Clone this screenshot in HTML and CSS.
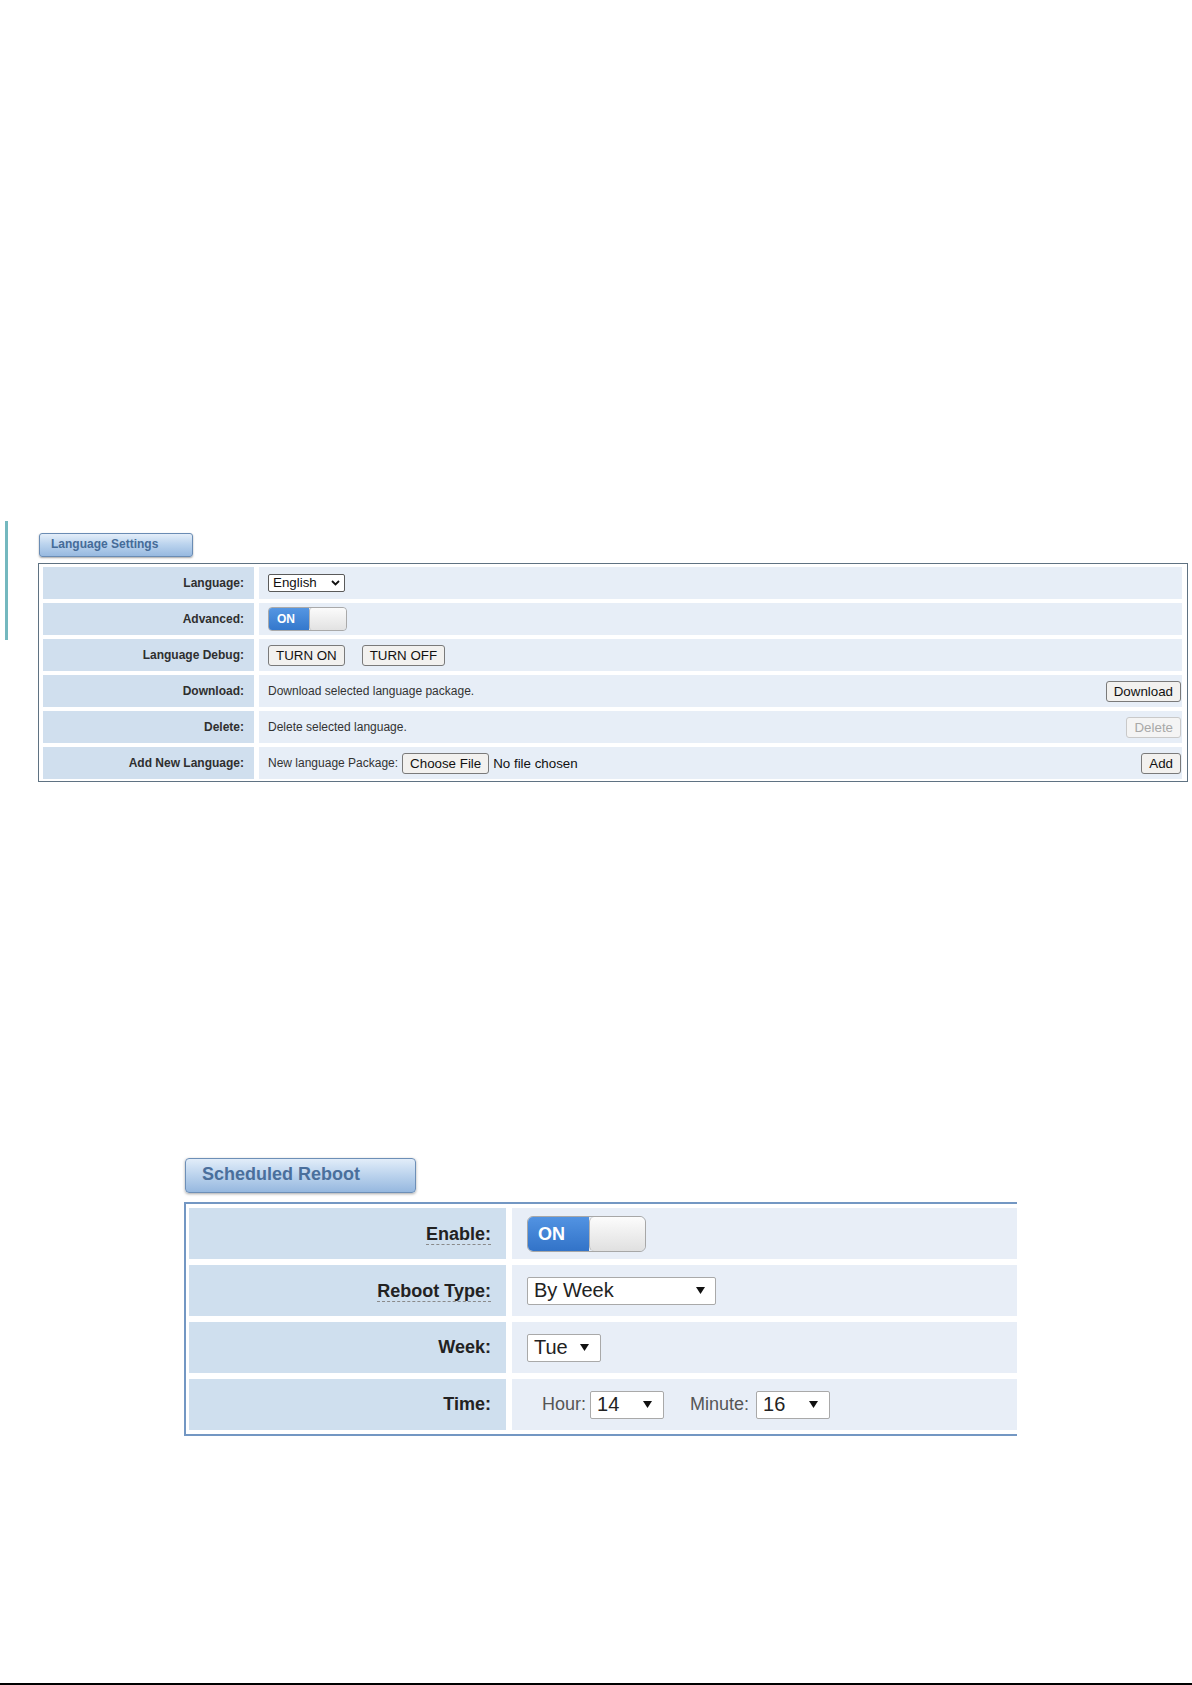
FILE: index.html
```html
<!DOCTYPE html>
<html lang="en">
<head>
<meta charset="utf-8">
<title>Language Settings</title>
<link rel="stylesheet" href="styles.css">
</head>
<body>
<div class="page">
  <section class="sec1">
    <div class="mark"></div>
    <div class="wrap1">
      <div class="tab1">Language Settings</div>
      <div class="panel1">
        <div class="row1">
          <div class="lab1">Language:</div>
          <div class="val1">
            <span class="sel1"><span>English</span><svg class="chev" width="9" height="6" viewBox="0 0 9 6"><polyline points="1,1 4.5,4.5 8,1" fill="none" stroke="#111" stroke-width="1.8"/></svg></span>
          </div>
        </div>
        <div class="row1">
          <div class="lab1">Advanced:</div>
          <div class="val1">
            <span class="sw1"><span class="sw1-on">ON</span><span class="sw1-knob"></span></span>
          </div>
        </div>
        <div class="row1">
          <div class="lab1">Language Debug:</div>
          <div class="val1">
            <button class="btn">TURN ON</button>
            <button class="btn btn-gap">TURN OFF</button>
          </div>
        </div>
        <div class="row1">
          <div class="lab1">Download:</div>
          <div class="val1 split">
            <span class="txt">Download selected language package.</span>
            <button class="btn">Download</button>
          </div>
        </div>
        <div class="row1">
          <div class="lab1">Delete:</div>
          <div class="val1 split">
            <span class="txt">Delete selected language.</span>
            <button class="btn btn-dis" disabled>Delete</button>
          </div>
        </div>
        <div class="row1">
          <div class="lab1">Add New Language:</div>
          <div class="val1 split">
            <span class="file-line"><span class="txt">New language Package:</span><button class="btn btn-file">Choose File</button><span class="nofile">No file chosen</span></span>
            <button class="btn">Add</button>
          </div>
        </div>
      </div>
    </div>
  </section>

  <section class="sec2">
    <div class="tab2">Scheduled Reboot</div>
    <div class="panel2">
      <div class="row2">
        <div class="lab2"><span class="dash">Enable:</span></div>
        <div class="val2">
          <span class="sw2"><span class="sw2-on">ON</span><span class="sw2-knob"></span></span>
        </div>
      </div>
      <div class="row2">
        <div class="lab2"><span class="dash">Reboot Type:</span></div>
        <div class="val2">
          <span class="sel2 sel2-wide"><span>By Week</span><svg class="tri" width="9" height="7" viewBox="0 0 9 7"><polygon points="0,0 9,0 4.5,7" fill="#111"/></svg></span>
        </div>
      </div>
      <div class="row2">
        <div class="lab2">Week:</div>
        <div class="val2">
          <span class="sel2"><span>Tue</span><svg class="tri" width="9" height="7" viewBox="0 0 9 7"><polygon points="0,0 9,0 4.5,7" fill="#111"/></svg></span>
        </div>
      </div>
      <div class="row2">
        <div class="lab2">Time:</div>
        <div class="val2">
          <span class="tlabel hour">Hour:</span>
          <span class="sel2"><span>14</span><svg class="tri" width="9" height="7" viewBox="0 0 9 7"><polygon points="0,0 9,0 4.5,7" fill="#111"/></svg></span>
          <span class="tlabel minute">Minute:</span>
          <span class="sel2"><span>16</span><svg class="tri" width="9" height="7" viewBox="0 0 9 7"><polygon points="0,0 9,0 4.5,7" fill="#111"/></svg></span>
        </div>
      </div>
    </div>
  </section>

  <div class="bottom-rule"></div>
</div>
</body>
</html>
```

FILE: styles.css
```css
html, body {
  margin: 0;
  padding: 0;
  background: #fff;
}
body {
  font-family: "Liberation Sans", Arial, sans-serif;
  color: #333;
}
.page {
  min-height: 1685px;
  display: flex;
  flex-direction: column;
}

/* ---------- section 1 ---------- */
.sec1 {
  display: flex;
  align-items: flex-start;
  padding-top: 521px;
}
.mark {
  flex: none;
  width: 3px;
  height: 119px;
  margin-left: 5px;
  background: #74b8bf;
}
.wrap1 {
  margin-left: 30px;
  margin-top: 12px;
  width: 1150px;
}
.tab1 {
  box-sizing: border-box;
  width: 154px;
  height: 24px;
  margin-left: 1px;
  margin-bottom: 6px;
  padding-left: 11px;
  line-height: 21px;
  font-size: 12px;
  font-weight: bold;
  color: #456b98;
  background: linear-gradient(#e4eef9 0%, #bcd4ee 45%, #97b9e0 100%);
  border: 1px solid #6a8cb4;
  border-radius: 3px;
  box-shadow: 0 1px 2px rgba(0, 0, 0, 0.35);
}
.panel1 {
  border: 1px solid #5f7282;
  padding: 3px 5px 2px 4px;
  display: grid;
  row-gap: 4px;
}
.row1 {
  display: grid;
  grid-template-columns: 211px 1fr;
  column-gap: 5px;
  height: 32px;
}
.lab1 {
  background: #d0dfee;
  text-align: right;
  padding-right: 10px;
  font-size: 12px;
  font-weight: bold;
  color: #2f2f2f;
  display: flex;
  align-items: center;
  justify-content: flex-end;
}
.val1 {
  background: #e7eef7;
  padding-left: 9px;
  padding-right: 1px;
  display: flex;
  align-items: center;
  font-size: 12px;
  color: #333;
}
.val1.split {
  justify-content: space-between;
}
.txt {
  font-size: 12px;
  color: #333;
}
.sel1 {
  box-sizing: border-box;
  display: inline-flex;
  align-items: center;
  justify-content: space-between;
  width: 77px;
  height: 18px;
  margin-top: -1px;
  padding: 0 4px 0 4px;
  border: 1px solid #5a5a5a;
  border-radius: 2px;
  background: #fff;
  font-size: 13.33px;
  color: #111;
}
.sw1 {
  box-sizing: border-box;
  display: inline-flex;
  width: 79px;
  height: 24px;
  border: 1px solid #a9a9a9;
  border-radius: 4px;
  overflow: hidden;
}
.sw1-on {
  width: 40px;
  background: linear-gradient(#5596e2, #3478cc);
  color: #fff;
  font-size: 12px;
  font-weight: bold;
  line-height: 22px;
  padding-left: 8px;
  box-sizing: border-box;
}
.sw1-knob {
  flex: 1;
  background: linear-gradient(#fbfbfb, #e2e2e2);
  border-left: 1px solid #b5b5b5;
  border-radius: 3px;
}
.btn {
  box-sizing: border-box;
  height: 21px;
  padding: 0 7px;
  margin: 0;
  font-family: "Liberation Sans", Arial, sans-serif;
  font-size: 13.33px;
  color: #111;
  background: #f2f1ef;
  border: 1px solid #7a7a7a;
  border-radius: 3px;
}
.btn-gap {
  margin-left: 17px;
}
.btn-dis {
  color: #a8a8a8;
  border-color: #c9c9c9;
  background: #f4f4f4;
}
.file-line {
  display: inline-flex;
  align-items: center;
}
.btn-file {
  margin-left: 4px;
}
.nofile {
  margin-left: 4px;
  font-size: 13.33px;
  color: #111;
}

/* ---------- section 2 ---------- */
.sec2 {
  margin-top: 376px;
  margin-left: 184px;
  width: 833px;
}
.tab2 {
  box-sizing: border-box;
  width: 231px;
  height: 35px;
  margin-left: 1px;
  margin-bottom: 9px;
  padding-left: 16px;
  line-height: 30px;
  font-size: 18px;
  font-weight: bold;
  color: #4a6f9c;
  background: linear-gradient(#e2edf9 0%, #bed5ee 45%, #96b8df 100%);
  border: 1px solid #6d8fb7;
  border-radius: 4px;
  box-shadow: 0 1px 3px rgba(0, 0, 0, 0.35);
}
.panel2 {
  border-top: 2px solid #7397c3;
  border-bottom: 2px solid #7397c3;
  border-left: 2px solid #7397c3;
  padding: 4px 0 4px 3px;
  display: grid;
  row-gap: 6px;
}
.row2 {
  display: grid;
  grid-template-columns: 317px 1fr;
  column-gap: 6px;
  height: 51px;
}
.lab2 {
  background: #cfdfee;
  display: flex;
  align-items: center;
  justify-content: flex-end;
  padding-right: 15px;
  font-size: 18px;
  font-weight: bold;
  color: #222;
}
.dash {
  border-bottom: 1px dashed #8a8a8a;
  line-height: 19px;
  margin-top: 2px;
}
.val2 {
  background: #e8eef7;
  display: flex;
  align-items: center;
  padding-left: 15px;
}
.sw2 {
  box-sizing: border-box;
  display: inline-flex;
  width: 119px;
  height: 36px;
  border: 1px solid #a7a7a7;
  border-radius: 6px;
  overflow: hidden;
}
.sw2-on {
  box-sizing: border-box;
  width: 61px;
  padding-left: 10px;
  background: linear-gradient(#5293e2, #3273c8);
  color: #fff;
  font-size: 18px;
  font-weight: bold;
  line-height: 34px;
}
.sw2-knob {
  flex: 1;
  background: linear-gradient(#fcfcfc, #e0e0e0);
  border-left: 1px solid #b3b3b3;
  border-radius: 5px;
}
.sel2 {
  box-sizing: border-box;
  display: inline-flex;
  align-items: center;
  justify-content: space-between;
  width: 74px;
  height: 28px;
  padding: 0 11px 0 6px;
  border: 1px solid #a9a9a9;
  border-radius: 2px;
  background: #fff;
  font-size: 20px;
  color: #222;
}
.sel2-wide {
  width: 189px;
  padding-right: 10px;
}
.tlabel {
  font-size: 18px;
  color: #555;
}
.hour {
  margin-left: 15px;
  margin-right: 4px;
}
.minute {
  margin-left: 26px;
  margin-right: 7px;
}

.bottom-rule {
  margin-top: auto;
  height: 2px;
  background: #000;
}
```
